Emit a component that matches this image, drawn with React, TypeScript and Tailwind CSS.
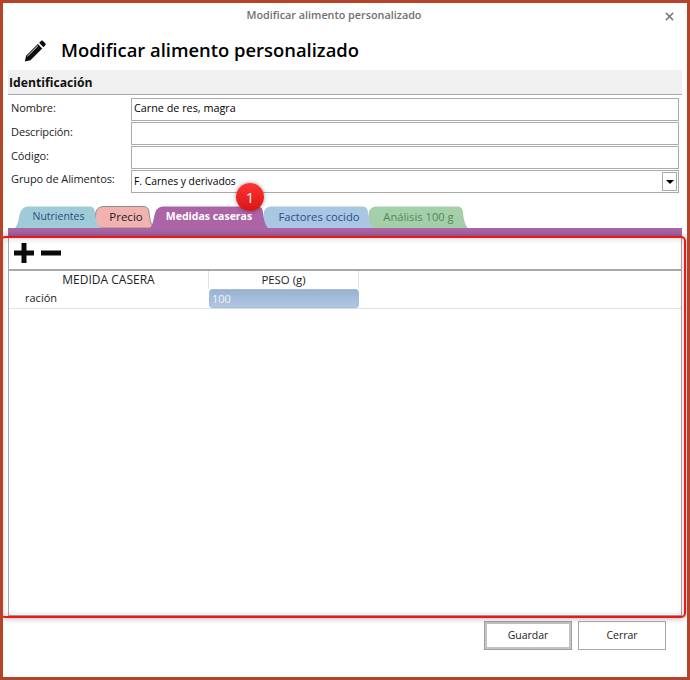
import React from 'react';
import { X } from 'lucide-react';

function TabShape({ w, h, l, fill, stroke }: { w: number; h: number; l: number; fill: string; stroke?: string }) {
  // rounded top corners, left slant depends on the tab, right side flares out at the foot
  const t = h - 22;
  const r = 5;
  const d = `M0 ${h} C${l * 0.5} ${h - 3} ${l * 0.6} ${h - 10} ${l * 0.8} ${h - 14} C${l} ${t + 3} ${l + 3} ${t + 0.5} ${l + 8} ${t + 0.5} L${w - r - 7} ${t + 0.5} C${w - r - 2} ${t + 0.5} ${w - r} ${t + 2} ${w - r} ${t + 7} C${w - r + 1} ${h - 6} ${w - 2} ${h - 2} ${w} ${h} Z`;
  return (
    <svg width={w} height={h} viewBox={`0 0 ${w} ${h}`} className="absolute left-0 bottom-0">
      <path d={d} fill={fill} stroke={stroke ?? 'none'} />
    </svg>
  );
}

function Tab({ label, w, h = 22, l = 2, fill, stroke, text, className }: { label: string; w: number; h?: number; l?: number; fill: string; stroke?: string; text: string; className?: string }) {
  return (
    <div className={`relative shrink-0 flex items-center justify-center h-[25px] ${className ?? ''}`} style={{ width: w }}>
      <TabShape w={w} h={h} l={l} fill={fill} stroke={stroke} />
      <span className={`relative leading-none ${text}`}>{label}</span>
    </div>
  );
}

function Field({ label, value }: { label: string; value?: string }) {
  return (
    <div className="flex items-start">
      <div className="w-[123px] pl-[3px] pt-[2px] text-[11px] leading-[15px] text-[#222] tracking-[-0.1px]">{label}</div>
      <div className="w-[548px] h-[23px] border border-[#ababab] px-[2px] text-[10.8px] leading-[18px] text-black">{value}</div>
    </div>
  );
}

export default function App() {
  return (
    <div className="relative w-[690px] h-[680px] bg-white border-[3px] border-[#b5432a] overflow-hidden font-['Open_Sans',sans-serif] flex flex-col">
      {/* Title bar */}
      <div className="relative h-[24px] shrink-0 flex items-center justify-center text-[10.8px] font-semibold text-[#6f6f6f] pt-[1px] pr-[22px]">
        Modificar alimento personalizado
        <X className="absolute right-[11px] top-[7px] w-[13px] h-[13px] text-[#777]" strokeWidth={3} />
      </div>

      {/* Heading */}
      <div className="h-[43px] shrink-0 flex items-center pl-[20px] gap-[14px]">
        <svg width="24" height="22" viewBox="0 0 25 22" className="mt-[4px]">
          <path d="M2 22 L3.2 16 L15.5 3.8 L20 8.3 L7.8 20.6 Z M16.8 2.5 L18.8 0.6 C19.4 0 20.2 0 20.8 0.6 L23.2 3 C23.8 3.6 23.8 4.4 23.2 5 L21.3 7 Z" fill="#0c0c0c" />
          <path d="M4.5 16.5 L15.5 5.6" stroke="#fff" strokeWidth="1" />
        </svg>
        <span className="text-[18.4px] font-semibold text-black leading-none mt-[3px]">Modificar alimento personalizado</span>
      </div>

      {/* Identificacion */}
      <div className="ml-[5px] w-[674px] h-[25px] shrink-0 bg-[#f0f0f0] border-b border-[#ababab] pl-[1px] text-[12.2px] font-bold leading-[25px] text-[#111]">
        Identificación
      </div>
      <div className="ml-[5px] w-[674px] mt-[3px] flex flex-col gap-[1px] shrink-0">
        <Field label="Nombre:" value="Carne de res, magra" />
        <Field label="Descripción:" />
        <Field label="Código:" />
        <div className="flex items-start">
          <div className="w-[123px] pl-[3px] pt-[1px] text-[11px] leading-[15px] text-[#222] tracking-[-0.1px]">Grupo de Alimentos:</div>
          <div className="w-[548px] h-[23px] border border-[#ababab] px-[2px] flex items-center justify-between text-[10.3px] text-black">
            F. Carnes y derivados
            <div className="w-[15px] h-[19px] border border-[#ababab] flex items-center justify-center mr-[-1px]">
              <div className="w-0 h-0 border-x-[4px] border-x-transparent border-t-[4px] border-t-black" />
            </div>
          </div>
        </div>
      </div>

      {/* Tabs: earlier tabs sit on top of later ones, the active one above all */}
      <div className="ml-[12px] mt-[10px] flex items-end shrink-0 h-[25px]">
        <Tab label="Nutrientes" w={85} l={6} fill="#9fcbd9" text="text-[10.5px] text-[#2b4f78] pt-[2px] pl-[2px]" className="z-10" />
        <Tab label="Precio" w={60} fill="#f1b2b0" stroke="#8c8c8c" text="text-[11.5px] text-[#222] pt-[3px] pl-[4px]" className="ml-[-6px]" />
        <Tab label="Medidas caseras" w={118} h={25} l={6} fill="#ab64a5" text="text-[10.5px] text-white font-bold pt-[1px]" className="ml-[-4px] z-30" />
        <Tab label="Factores cocido" w={111} fill="#a9c6e2" text="text-[11.2px] text-[#27508c] pt-[3px] pl-[3px]" className="ml-[-6px] z-20" />
        <Tab label="Análisis 100 g" w={101} fill="#a5cfa9" text="text-[11.2px] text-[#4f8a5b] pt-[3px] pl-[2px]" className="ml-[-6px] z-10" />
      </div>
      <div className="relative z-40 ml-[5px] w-[674px] h-[8px] shrink-0 bg-[#ab64a5]" />

      {/* Panel */}
      <div className="ml-[5px] w-[674px] h-[380px] shrink-0 border-x border-b border-[#a8a8a8] flex flex-col">
        <div className="h-[33px] shrink-0 flex items-center pl-[5px] gap-[7px]">
          <svg width="20" height="20" viewBox="0 0 20 20"><path d="M7.5 0h5v7.5H20v5h-7.5V20h-5v-7.5H0v-5h7.5z" fill="#0a0a0a" /></svg>
          <svg width="20" height="20" viewBox="0 0 20 20"><rect x="0" y="7.5" width="20" height="5" fill="#0a0a0a" /></svg>
        </div>
        <div className="border-t-2 border-[#a8a8a8]">
          <div className="flex h-[18px] text-[12px] leading-[18px] text-[#222]">
            <div className="w-[200px] text-center border-r border-[#e2e2e2]">MEDIDA CASERA</div>
            <div className="w-[150px] text-center border-r border-[#e2e2e2] text-[11.4px]">PESO (g)</div>
          </div>
          <div className="flex h-[20px] border-b border-[#e2e2e2] text-[11px] leading-[18px]">
            <div className="w-[200px] pl-[16px] text-[#222]">ración</div>
            <div className="w-[150px] h-[19px] rounded-[3px] pl-[2px] text-[#eef3f9] bg-gradient-to-b from-[#98b2d1] to-[#afc8e4] border border-[#a5bdd9]">100</div>
          </div>
        </div>
      </div>

      {/* Buttons */}
      <div className="flex justify-end gap-[6px] mr-[21px] mt-[5px] shrink-0">
        <button className="w-[88px] h-[29px] border-[3px] border-[#c4c4c4] outline outline-1 outline-[#a0a0a0] -outline-offset-1 text-[10.5px] text-[#222]">Guardar</button>
        <button className="w-[88px] h-[29px] border border-[#ababab] text-[10.5px] text-[#222]">Cerrar</button>
      </div>

      {/* Annotation overlay */}
      <div className="absolute z-40 left-[-3px] top-[233px] w-[686px] h-[382px] border-2 border-[#f01616] rounded-[5px] shadow-[0_0_6px_rgba(0,0,0,0.35),inset_0_0_6px_rgba(0,0,0,0.2)] pointer-events-none" />
      <div className="absolute z-50 left-[233px] top-[180px] w-[28px] h-[28px] rounded-full bg-gradient-to-b from-[#f33] to-[#d81414] shadow-[0_0_4px_rgba(0,0,0,0.4)] flex items-center justify-center text-white text-[15px]">1</div>
    </div>
  );
}
